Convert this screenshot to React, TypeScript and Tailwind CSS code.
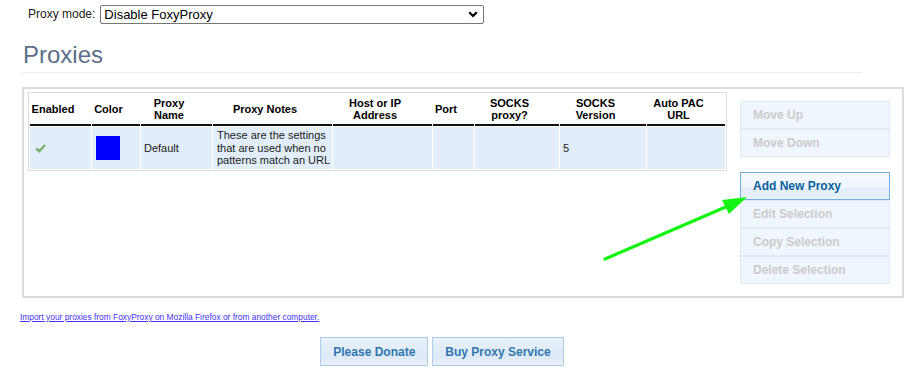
const headers: { label: string[]; w: string }[] = [
  { label: ["Enabled"], w: "w-[61px]" },
  { label: ["Color"], w: "w-[48px]" },
  { label: ["Proxy", "Name"], w: "w-[71px]" },
  { label: ["Proxy Notes"], w: "w-[119px]" },
  { label: ["Host or IP", "Address"], w: "w-[99px]" },
  { label: ["Port"], w: "w-[41px]" },
  { label: ["SOCKS", "proxy?"], w: "w-[84px]" },
  { label: ["SOCKS", "Version"], w: "w-[86px]" },
  { label: ["Auto PAC", "URL"], w: "w-[78px]" },
];

function SideButton({ label, active = false, className = "" }: { label: string; active?: boolean; className?: string }) {
  return (
    <button
      className={
        "block w-[150px] h-[28px] text-left pl-[12px] text-[12px] font-bold border " +
        (active
          ? "border-[#74b0df] text-[#0c5f9c] bg-[linear-gradient(#f4f9fe_0%,#eef5fc_55%,#e2edf8_60%,#e6f0fa_100%)]"
          : "border-[#dfeaf5] text-[#cbcbcb] bg-[#eff6fd]") +
        " " +
        className
      }
    >
      {label}
    </button>
  );
}

export default function App() {
  return (
    <div className="relative w-[906px] h-[389px] bg-white overflow-hidden font-['Liberation_Sans',Arial,sans-serif] text-black">
      {/* Proxy mode */}
      <div className="flex items-center pl-[28px] pt-[5px] h-[24px]">
        <label className="text-[12px] leading-[19px] text-[#222]">Proxy mode:</label>
        <div className="relative ml-[5px] h-[19px]">
          <select className="block appearance-none w-[384px] h-[19px] border border-[#767676] rounded-[2px] bg-white pl-[3px] py-0 text-[13px] leading-[17px] text-black outline-none">
            <option>Disable FoxyProxy</option>
          </select>
          <svg className="absolute right-[6px] top-[6px] pointer-events-none" width="10" height="7" viewBox="0 0 10 7">
            <path d="M1.2 1.2 L5 5 L8.8 1.2" fill="none" stroke="#000" strokeWidth="2.2" />
          </svg>
        </div>
      </div>

      <div className="pl-[22px]">
        {/* Heading */}
        <h1 className="mt-[19px] pl-[1px] text-[24px] leading-[24px] text-[#5b6e8b]">Proxies</h1>
        <div className="mt-[5px] h-px w-[840px] bg-[#ebebeb]" />

        {/* Proxy panel */}
        <div className="mt-[14px] w-[882px] h-[211px] border-2 border-[#dcdcdc] pl-[4px] pt-[3px] flex">
          <table className="table-fixed w-[699px] self-start border border-[#dddddd] border-separate border-spacing-[1px] text-[11px]">
            <thead>
              <tr>
                {headers.map((h, i) => (
                  <th
                    key={i}
                    className={`${h.w} h-[32px] p-0 pr-[15px] text-center align-middle font-bold leading-[12px] border-b-2 border-[#111]`}
                  >
                    {h.label.map((l, j) => (
                      <div key={j}>{l}</div>
                    ))}
                  </th>
                ))}
              </tr>
            </thead>
            <tbody>
              <tr className="h-[42px] text-[#1a1a1a]">
                <td className="bg-[#e1eef9] pl-[5px] align-middle">
                  <svg width="11" height="10" viewBox="0 0 11 10" className="mt-[1px]">
                    <path d="M0.8 5.4 L2.4 3.9 L4.2 5.8 L9.4 0.6 L10.4 1.8 L4.2 8.6 Z" fill="#78b068" stroke="#5c9a4f" strokeWidth="0.5" />
                  </svg>
                </td>
                <td className="bg-[#e1eef9] pl-[4px] align-middle">
                  <div className="w-[24px] h-[24px] bg-[#0000ff]" />
                </td>
                <td className="bg-[#e1eef9] pl-[3px] align-middle">Default</td>
                <td className="bg-[#e1eef9] pl-[4px] pr-0 align-middle leading-[12.5px]">
                  These are the settings that are used when no patterns match an URL
                </td>
                <td className="bg-[#e1eef9]" />
                <td className="bg-[#e1eef9]" />
                <td className="bg-[#e1eef9]" />
                <td className="bg-[#e1eef9] pl-[3px] align-middle">5</td>
                <td className="bg-[#e1eef9]" />
              </tr>
            </tbody>
          </table>

          <div className="ml-[13px] mt-[9px] flex flex-col">
            <SideButton label="Move Up" />
            <SideButton label="Move Down" />
            <SideButton label="Add New Proxy" active className="mt-[15px]" />
            <SideButton label="Edit Selection" />
            <SideButton label="Copy Selection" />
            <SideButton label="Delete Selection" />
          </div>
        </div>

        {/* Import link */}
        <a href="#" className="block mt-[14px] -ml-[2px] text-[8.4px] leading-[10px] text-[#4433ff] underline">
          Import your proxies from FoxyProxy on Mozilla Firefox or from another computer.
        </a>

        {/* Bottom buttons */}
        <div className="mt-[15px] w-[840px] flex justify-center gap-[4px]">
          <button className="h-[29px] px-[12px] border border-[#a9cdea] bg-[linear-gradient(#e8f2fb_0%,#dde9f6_70%,#e9f2fb_100%)] text-[12px] font-bold text-[#2f77ae]">
            Please Donate
          </button>
          <button className="h-[29px] px-[12px] border border-[#a9cdea] bg-[linear-gradient(#e8f2fb_0%,#dde9f6_70%,#e9f2fb_100%)] text-[12px] font-bold text-[#2f77ae]">
            Buy Proxy Service
          </button>
        </div>
      </div>

      {/* Green annotation arrow */}
      <svg className="absolute left-0 top-0 pointer-events-none" width="906" height="389" viewBox="0 0 906 389">
        <line x1="605" y1="259" x2="728" y2="206" stroke="#11f511" strokeWidth="3.2" strokeLinecap="round" />
        <polygon points="747,197 722,200 729,214" fill="#11f511" />
      </svg>
    </div>
  );
}
